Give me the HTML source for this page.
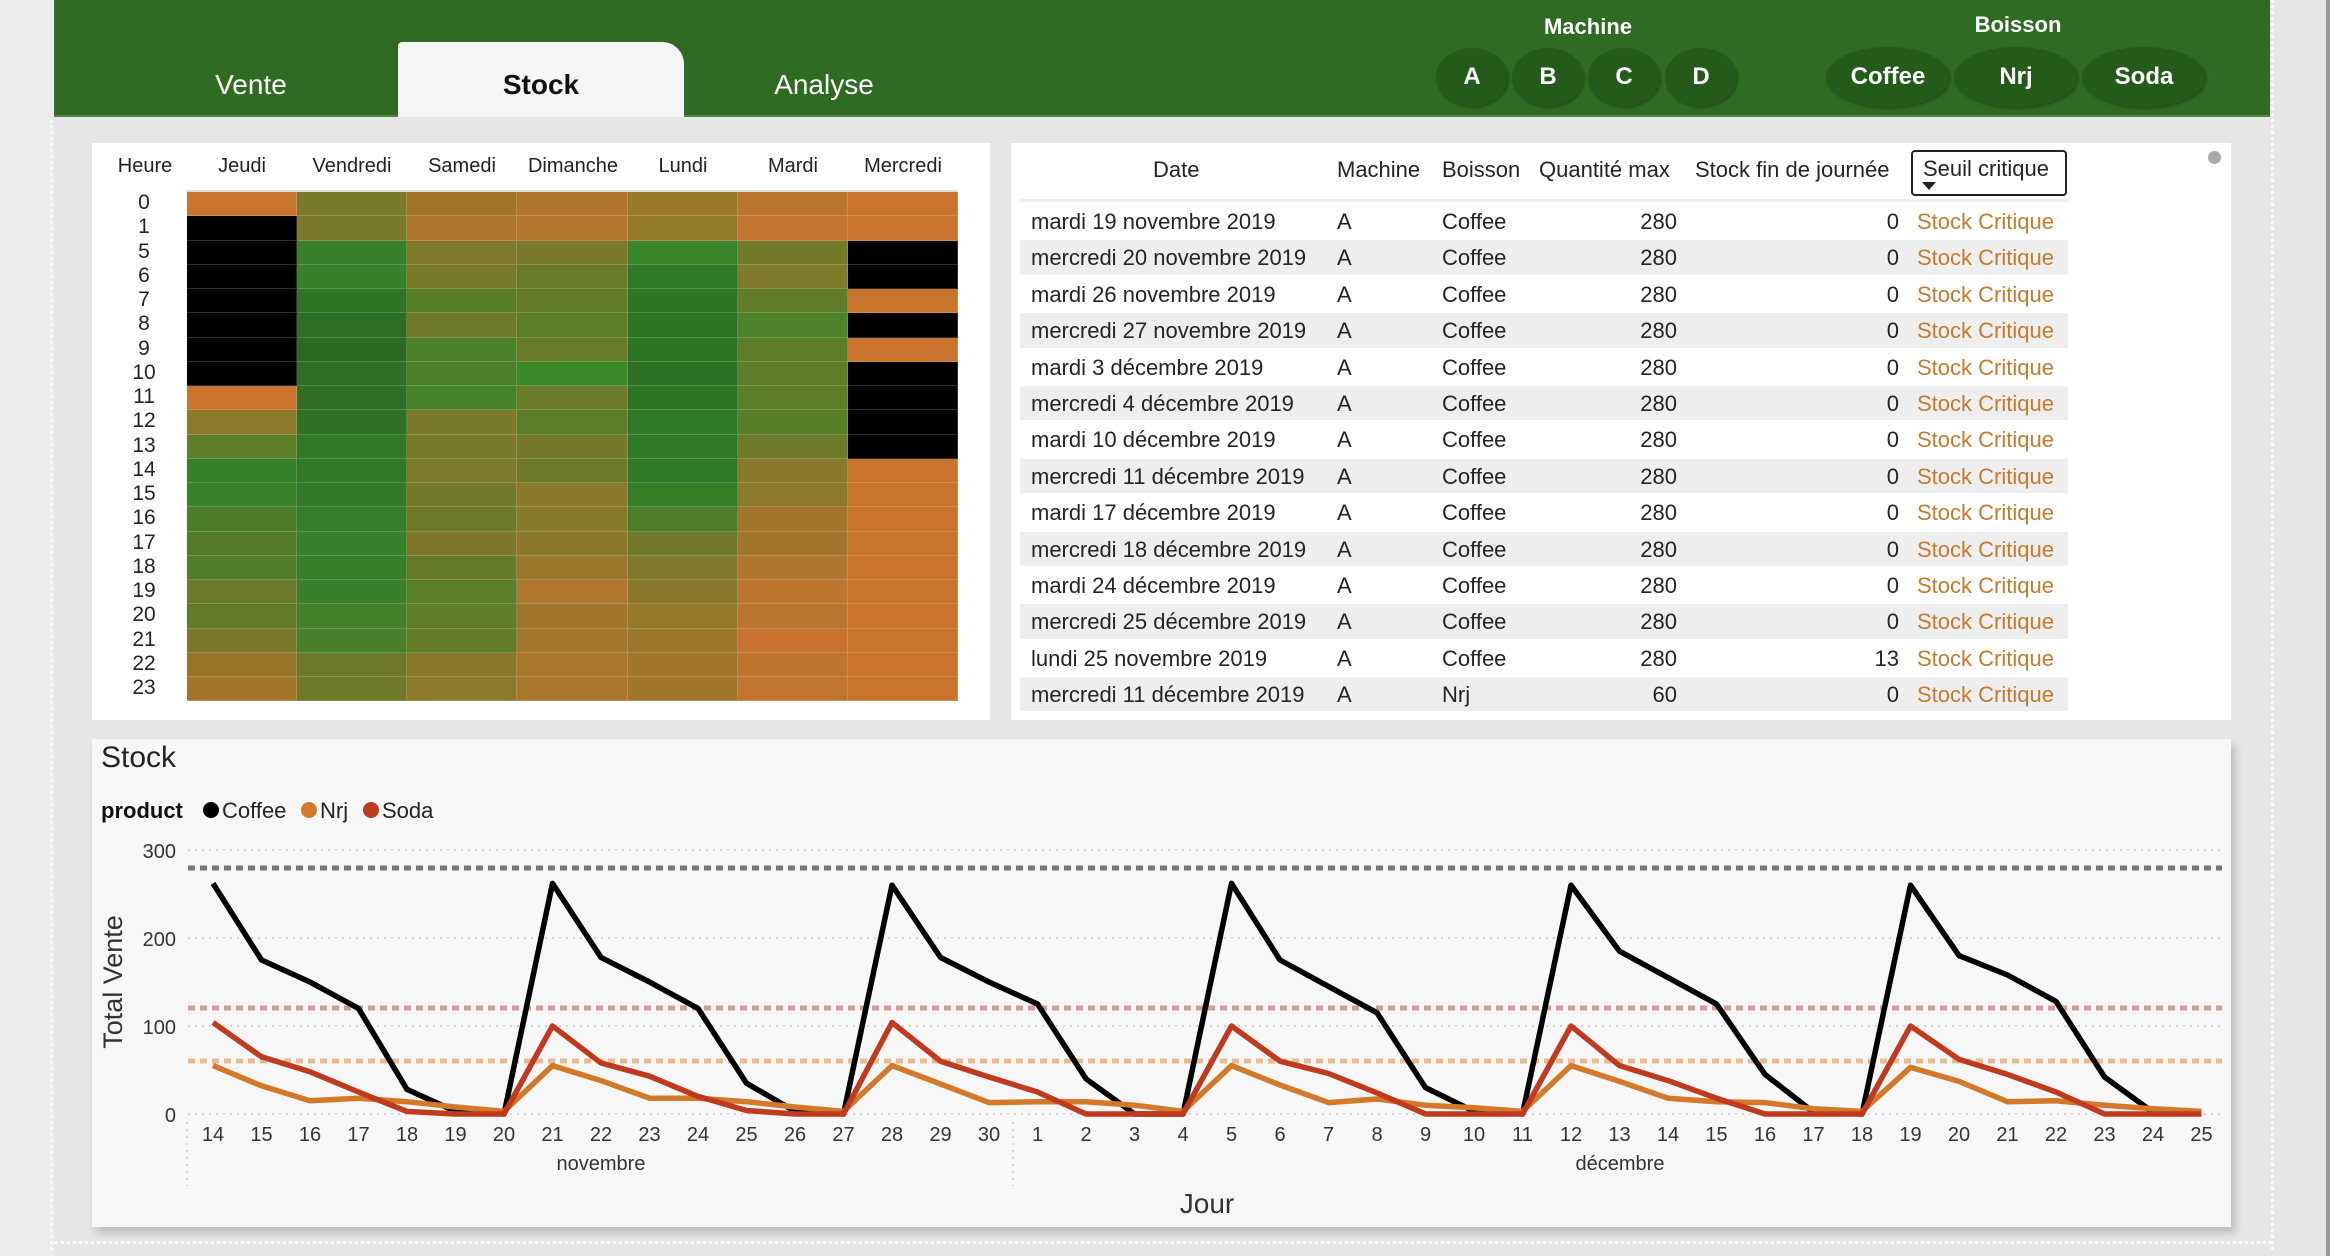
<!DOCTYPE html>
<html><head><meta charset="utf-8"><style>
*{margin:0;padding:0;box-sizing:border-box}
body{width:2330px;height:1256px;background:#e6e6e6;font-family:"Liberation Sans",sans-serif;position:relative;overflow:hidden;color:#252423}
.abs{position:absolute}
#left{left:0;top:0;width:54px;height:1256px;background:#ebebeb}
#vl{left:50px;top:120px;height:1130px;border-left:3px dotted #fafafa}
#vr{left:2271px;top:0;height:1250px;border-left:3px dotted #fafafa}
#hb{left:54px;top:1241px;width:2218px;border-top:3px dotted #fafafa}
#rl{left:2326px;top:0;width:4px;height:1256px;background:#9a9a9a}
#hdr{left:54px;top:0;width:2216px;height:117px;background:#2f6b23;border-bottom:2px solid #4b8a3d}
.tab{top:42px;height:75px;width:286px;text-align:center;line-height:86px;font-size:28px;color:#fff}
#stock{left:398px;background:#f5f5f5;color:#111;font-weight:bold;border-radius:4px 22px 0 0}
.lbl{color:#fff;font-weight:bold;font-size:22px;text-align:center;width:200px}
.btn{top:48px;height:58px;background:#245a1a;border-radius:50%;color:#fff;font-weight:bold;font-size:24px;text-align:center;line-height:58px;box-shadow:1px 2px 2px rgba(0,0,0,.25)}
.panel{background:#fff}
#hm{left:92px;top:143px;width:898px;height:577px}
.hh{top:155px;font-size:20px;color:#222;text-align:center;width:110px}
#grid{left:187px;top:190px;width:771px;display:grid;grid-template-columns:repeat(7,1fr);grid-auto-rows:24.25px;border-top:2px solid #ddd}
#grid i{display:block;border-right:1px solid rgba(255,255,255,.18);border-bottom:1px solid rgba(255,255,255,.18)}
#rows{left:100px;top:191px;width:88px;font-size:21px;text-align:center;line-height:24.25px}
#tb{left:1011px;top:143px;width:1220px;height:577px}
.th{top:157px;font-size:22px;color:#252423}
#tr{left:1020px;top:202px;width:1048px}
.r{height:36.4px;position:relative;font-size:22px;line-height:36px;border-top:2px solid #fff}
.r:nth-child(even){background:#eeeeee}
.r span{position:absolute}
.c1{left:11px}.c2{left:317px}.c3{left:422px}.c4{right:391px}.c5{right:169px}.c6{left:897px;color:#c57a2e}
#chart{left:92px;top:739px;width:2139px;height:488px;background:#f7f7f7;box-shadow:4px 6px 8px rgba(0,0,0,.18)}
</style></head><body>
<div id="left" class="abs"></div><div id="vl" class="abs"></div><div id="vr" class="abs"></div><div id="hb" class="abs"></div><div id="rl" class="abs"></div>
<div id="hdr" class="abs"></div>
<div class="abs tab" style="left:108px">Vente</div>
<div id="stock" class="abs tab">Stock</div>
<div class="abs tab" style="left:681px">Analyse</div>
<div class="abs lbl" style="left:1488px;top:14px">Machine</div>
<div class="abs lbl" style="left:1918px;top:12px">Boisson</div>
<div class="abs btn" style="left:1436px;width:72px">A</div>
<div class="abs btn" style="left:1512px;width:72px">B</div>
<div class="abs btn" style="left:1588px;width:72px">C</div>
<div class="abs btn" style="left:1665px;width:72px">D</div>
<div class="abs btn" style="left:1826px;width:124px;top:47px;height:60px;line-height:60px">Coffee</div>
<div class="abs btn" style="left:1954px;width:124px;top:47px;height:60px;line-height:60px">Nrj</div>
<div class="abs btn" style="left:2082px;width:124px;top:47px;height:60px;line-height:60px">Soda</div>

<div id="hm" class="abs panel"></div>
<div class="abs hh" style="left:90px">Heure</div>
<div class="abs hh" style="left:187px">Jeudi</div>
<div class="abs hh" style="left:297px">Vendredi</div>
<div class="abs hh" style="left:407px">Samedi</div>
<div class="abs hh" style="left:517px;width:112px">Dimanche</div>
<div class="abs hh" style="left:628px">Lundi</div>
<div class="abs hh" style="left:738px">Mardi</div>
<div class="abs hh" style="left:848px">Mercredi</div>
<div id="rows" class="abs"><div>0</div><div>1</div><div>5</div><div>6</div><div>7</div><div>8</div><div>9</div><div>10</div><div>11</div><div>12</div><div>13</div><div>14</div><div>15</div><div>16</div><div>17</div><div>18</div><div>19</div><div>20</div><div>21</div><div>22</div><div>23</div></div>
<div id="grid" class="abs">
<i style="background:#c8732e"></i><i style="background:#7a7a2a"></i><i style="background:#a3752b"></i><i style="background:#b0762f"></i><i style="background:#9b7a2c"></i><i style="background:#b9742e"></i><i style="background:#c8732e"></i>
<i style="background:#000"></i><i style="background:#7a7a2a"></i><i style="background:#b0762f"></i><i style="background:#b3762f"></i><i style="background:#967a2c"></i><i style="background:#c0742f"></i><i style="background:#c8732e"></i>
<i style="background:#000"></i><i style="background:#37812a"></i><i style="background:#7f7a2b"></i><i style="background:#7a7a2a"></i><i style="background:#39862a"></i><i style="background:#737b2a"></i><i style="background:#000"></i>
<i style="background:#000"></i><i style="background:#37812a"></i><i style="background:#787a2a"></i><i style="background:#677b2a"></i><i style="background:#2f7a27"></i><i style="background:#807a2b"></i><i style="background:#000"></i>
<i style="background:#000"></i><i style="background:#2f7326"></i><i style="background:#597e2a"></i><i style="background:#627c2a"></i><i style="background:#2e7526"></i><i style="background:#617c2a"></i><i style="background:#c8732e"></i>
<i style="background:#000"></i><i style="background:#2d6d25"></i><i style="background:#6f7a2a"></i><i style="background:#5b7e2a"></i><i style="background:#2e7326"></i><i style="background:#4b822a"></i><i style="background:#000"></i>
<i style="background:#000"></i><i style="background:#2c6a24"></i><i style="background:#4d802a"></i><i style="background:#677b2a"></i><i style="background:#2f7526"></i><i style="background:#5c7d2a"></i><i style="background:#c8732e"></i>
<i style="background:#000"></i><i style="background:#2e6e25"></i><i style="background:#4a802a"></i><i style="background:#3a8a2a"></i><i style="background:#2d7026"></i><i style="background:#5d7d2a"></i><i style="background:#000"></i>
<i style="background:#c8732e"></i><i style="background:#2d6d25"></i><i style="background:#458229"></i><i style="background:#6b7b2a"></i><i style="background:#2e7526"></i><i style="background:#5c7d2a"></i><i style="background:#000"></i>
<i style="background:#8b7a2b"></i><i style="background:#2f7026"></i><i style="background:#7b7a2a"></i><i style="background:#5c7d2a"></i><i style="background:#2f7a27"></i><i style="background:#587e2a"></i><i style="background:#000"></i>
<i style="background:#5e7e2a"></i><i style="background:#327827"></i><i style="background:#7a7a2a"></i><i style="background:#747a2a"></i><i style="background:#2f7a27"></i><i style="background:#6f7a2a"></i><i style="background:#000"></i>
<i style="background:#35812a"></i><i style="background:#327827"></i><i style="background:#7d7a2a"></i><i style="background:#6e7a2a"></i><i style="background:#2e7a27"></i><i style="background:#8a792b"></i><i style="background:#c8732e"></i>
<i style="background:#38822a"></i><i style="background:#337927"></i><i style="background:#737a2a"></i><i style="background:#8b792b"></i><i style="background:#357f27"></i><i style="background:#8e792b"></i><i style="background:#c8732e"></i>
<i style="background:#4c7e2a"></i><i style="background:#357d28"></i><i style="background:#6c7a2a"></i><i style="background:#867a2b"></i><i style="background:#4f7e2a"></i><i style="background:#a4762d"></i><i style="background:#c8732e"></i>
<i style="background:#557b2a"></i><i style="background:#37812a"></i><i style="background:#7f772a"></i><i style="background:#8b792b"></i><i style="background:#707a2a"></i><i style="background:#a3762d"></i><i style="background:#c8732e"></i>
<i style="background:#537d2a"></i><i style="background:#387f2a"></i><i style="background:#657b2a"></i><i style="background:#9b772c"></i><i style="background:#827a2b"></i><i style="background:#b0752e"></i><i style="background:#c8732e"></i>
<i style="background:#6a7a2a"></i><i style="background:#3c7f2a"></i><i style="background:#5a7e2a"></i><i style="background:#b0772f"></i><i style="background:#8a792b"></i><i style="background:#bd742f"></i><i style="background:#c8732e"></i>
<i style="background:#617b2a"></i><i style="background:#447f2a"></i><i style="background:#5f7d2a"></i><i style="background:#a0772c"></i><i style="background:#977a2c"></i><i style="background:#b9742f"></i><i style="background:#c8732e"></i>
<i style="background:#7d772a"></i><i style="background:#497f2a"></i><i style="background:#627c2a"></i><i style="background:#a3772d"></i><i style="background:#9d772c"></i><i style="background:#c8722f"></i><i style="background:#c8732e"></i>
<i style="background:#967529"></i><i style="background:#6e7a2a"></i><i style="background:#8a792b"></i><i style="background:#ab762e"></i><i style="background:#a1762d"></i><i style="background:#bd742f"></i><i style="background:#c8732e"></i>
<i style="background:#a3742b"></i><i style="background:#6e7a2a"></i><i style="background:#8d782b"></i><i style="background:#ad762e"></i><i style="background:#a1762d"></i><i style="background:#c0742f"></i><i style="background:#c8732e"></i>
</div>

<div id="tb" class="abs panel"></div>
<div class="abs th" style="left:1153px">Date</div>
<div class="abs th" style="left:1337px">Machine</div>
<div class="abs th" style="left:1442px">Boisson</div>
<div class="abs th" style="left:1539px">Quantité max</div>
<div class="abs th" style="left:1695px">Stock fin de journée</div>
<div class="abs" style="left:1911px;top:150px;width:156px;height:46px;border:2px solid #222;border-radius:4px;font-size:22px;padding:4px 0 0 10px">Seuil critique<div class="abs" style="left:9px;top:30px;width:0;height:0;border-left:7px solid transparent;border-right:7px solid transparent;border-top:8px solid #222"></div></div>
<div class="abs" style="left:2208px;top:151px;width:13px;height:13px;border-radius:50%;background:#aaa"></div>
<div class="abs" style="left:1020px;top:199px;width:1048px;height:3px;background:#eee"></div>
<div id="tr" class="abs">
<div class="r"><span class="c1">mardi 19 novembre 2019</span><span class="c2">A</span><span class="c3">Coffee</span><span class="c4">280</span><span class="c5">0</span><span class="c6">Stock Critique</span></div>
<div class="r"><span class="c1">mercredi 20 novembre 2019</span><span class="c2">A</span><span class="c3">Coffee</span><span class="c4">280</span><span class="c5">0</span><span class="c6">Stock Critique</span></div>
<div class="r"><span class="c1">mardi 26 novembre 2019</span><span class="c2">A</span><span class="c3">Coffee</span><span class="c4">280</span><span class="c5">0</span><span class="c6">Stock Critique</span></div>
<div class="r"><span class="c1">mercredi 27 novembre 2019</span><span class="c2">A</span><span class="c3">Coffee</span><span class="c4">280</span><span class="c5">0</span><span class="c6">Stock Critique</span></div>
<div class="r"><span class="c1">mardi 3 décembre 2019</span><span class="c2">A</span><span class="c3">Coffee</span><span class="c4">280</span><span class="c5">0</span><span class="c6">Stock Critique</span></div>
<div class="r"><span class="c1">mercredi 4 décembre 2019</span><span class="c2">A</span><span class="c3">Coffee</span><span class="c4">280</span><span class="c5">0</span><span class="c6">Stock Critique</span></div>
<div class="r"><span class="c1">mardi 10 décembre 2019</span><span class="c2">A</span><span class="c3">Coffee</span><span class="c4">280</span><span class="c5">0</span><span class="c6">Stock Critique</span></div>
<div class="r"><span class="c1">mercredi 11 décembre 2019</span><span class="c2">A</span><span class="c3">Coffee</span><span class="c4">280</span><span class="c5">0</span><span class="c6">Stock Critique</span></div>
<div class="r"><span class="c1">mardi 17 décembre 2019</span><span class="c2">A</span><span class="c3">Coffee</span><span class="c4">280</span><span class="c5">0</span><span class="c6">Stock Critique</span></div>
<div class="r"><span class="c1">mercredi 18 décembre 2019</span><span class="c2">A</span><span class="c3">Coffee</span><span class="c4">280</span><span class="c5">0</span><span class="c6">Stock Critique</span></div>
<div class="r"><span class="c1">mardi 24 décembre 2019</span><span class="c2">A</span><span class="c3">Coffee</span><span class="c4">280</span><span class="c5">0</span><span class="c6">Stock Critique</span></div>
<div class="r"><span class="c1">mercredi 25 décembre 2019</span><span class="c2">A</span><span class="c3">Coffee</span><span class="c4">280</span><span class="c5">0</span><span class="c6">Stock Critique</span></div>
<div class="r"><span class="c1">lundi 25 novembre 2019</span><span class="c2">A</span><span class="c3">Coffee</span><span class="c4">280</span><span class="c5">13</span><span class="c6">Stock Critique</span></div>
<div class="r"><span class="c1">mercredi 11 décembre 2019</span><span class="c2">A</span><span class="c3">Nrj</span><span class="c4">60</span><span class="c5">0</span><span class="c6">Stock Critique</span></div>
</div>

<div id="chart" class="abs"></div>
<svg class="abs" style="left:0;top:0" width="2330" height="1256" font-family="Liberation Sans, sans-serif">
<text x="101" y="767" font-size="30" fill="#252423">Stock</text>
<text x="101" y="818" font-size="22" font-weight="bold" fill="#111">product</text>
<circle cx="211" cy="810" r="8" fill="#000"/><text x="222" y="818" font-size="22" fill="#252423">Coffee</text>
<circle cx="309" cy="810" r="8" fill="#d4792a"/><text x="320" y="818" font-size="22" fill="#252423">Nrj</text>
<circle cx="371" cy="810" r="8" fill="#c03a1e"/><text x="382" y="818" font-size="22" fill="#252423">Soda</text>
<g font-size="20" fill="#333" text-anchor="end"><text x="176" y="858">300</text><text x="176" y="946">200</text><text x="176" y="1034">100</text><text x="176" y="1122">0</text></g>
<text transform="translate(122,982) rotate(-90)" font-size="27" fill="#333" text-anchor="middle">Total Vente</text>
<g stroke="#c8c8c8" stroke-width="1.5" stroke-dasharray="2 5"><line x1="188" y1="850" x2="2222" y2="850"/><line x1="188" y1="938" x2="2222" y2="938"/><line x1="188" y1="1026" x2="2222" y2="1026"/><line x1="188" y1="1114" x2="2222" y2="1114"/><line x1="187" y1="1122" x2="187" y2="1186"/><line x1="1013" y1="1122" x2="1013" y2="1186"/></g>
<g stroke-width="5" stroke-dasharray="7 5"><line x1="188" y1="868" x2="2222" y2="868" stroke="#777"/><line x1="188" y1="1008" x2="2222" y2="1008" stroke="#dc9890"/><line x1="188" y1="1061" x2="2222" y2="1061" stroke="#eabb90"/></g>
<g fill="none" stroke-width="5.5" stroke-linejoin="round">
<polyline stroke="#000" points="213,883.4 261.5,960 310,982 358.5,1008.4 407,1089.4 455.5,1111.4 504,1114 552.5,883.4 601,957.4 649.5,982 698,1008.4 746.5,1083.2 795,1111.4 843.5,1114 892,885.2 940.5,957.4 989,982 1037.5,1004 1086,1078.8 1134.5,1114 1183,1114 1231.5,883.4 1280,960 1328.5,986.4 1377,1012.8 1425.5,1087.6 1474,1111.4 1522.5,1114 1571,885.2 1619.5,951.2 1668,977.6 1716.5,1004 1765,1074.4 1813.5,1112.2 1862,1114 1910.5,885.2 1959,955.6 2007.5,975 2056,1001.4 2104.5,1077 2153,1112.2 2201.5,1112.2"/>
<polyline stroke="#d4792a" points="213,1065.6 261.5,1085.8 310,1100.8 358.5,1098.2 407,1101.7 455.5,1107 504,1111.4 552.5,1065.6 601,1080.6 649.5,1098.2 698,1098.2 746.5,1101.7 795,1107 843.5,1111.4 892,1065.6 940.5,1084 989,1102.6 1037.5,1101.7 1086,1101.7 1134.5,1105.2 1183,1111.4 1231.5,1065.6 1280,1085 1328.5,1102.6 1377,1099 1425.5,1105.2 1474,1107.8 1522.5,1111.4 1571,1065.6 1619.5,1081.4 1668,1098.2 1716.5,1101.7 1765,1102.6 1813.5,1108.7 1862,1111.4 1910.5,1067.4 1959,1081.4 2007.5,1101.7 2056,1100.8 2104.5,1105.2 2153,1108.7 2201.5,1111.4"/>
<polyline stroke="#c03a1e" points="213,1022.5 261.5,1056.8 310,1071.8 358.5,1092 407,1111.4 455.5,1114 504,1114 552.5,1026 601,1063 649.5,1076.2 698,1096.4 746.5,1110.5 795,1114 843.5,1114 892,1022.5 940.5,1061.2 989,1077 1037.5,1092 1086,1114 1134.5,1114 1183,1114 1231.5,1026 1280,1061.2 1328.5,1073.5 1377,1092.9 1425.5,1114 1474,1114 1522.5,1114 1571,1026 1619.5,1065.6 1668,1080.6 1716.5,1098.2 1765,1114 1813.5,1114 1862,1114 1910.5,1026 1959,1059.4 2007.5,1074.4 2056,1092 2104.5,1114 2153,1114 2201.5,1114"/>
</g>
<g font-size="20" fill="#333" text-anchor="middle">
<text x="213" y="1141">14</text><text x="261.5" y="1141">15</text><text x="310" y="1141">16</text><text x="358.5" y="1141">17</text><text x="407" y="1141">18</text><text x="455.5" y="1141">19</text><text x="504" y="1141">20</text><text x="552.5" y="1141">21</text><text x="601" y="1141">22</text><text x="649.5" y="1141">23</text><text x="698" y="1141">24</text><text x="746.5" y="1141">25</text><text x="795" y="1141">26</text><text x="843.5" y="1141">27</text><text x="892" y="1141">28</text><text x="940.5" y="1141">29</text><text x="989" y="1141">30</text><text x="1037.5" y="1141">1</text><text x="1086" y="1141">2</text><text x="1134.5" y="1141">3</text><text x="1183" y="1141">4</text><text x="1231.5" y="1141">5</text><text x="1280" y="1141">6</text><text x="1328.5" y="1141">7</text><text x="1377" y="1141">8</text><text x="1425.5" y="1141">9</text><text x="1474" y="1141">10</text><text x="1522.5" y="1141">11</text><text x="1571" y="1141">12</text><text x="1619.5" y="1141">13</text><text x="1668" y="1141">14</text><text x="1716.5" y="1141">15</text><text x="1765" y="1141">16</text><text x="1813.5" y="1141">17</text><text x="1862" y="1141">18</text><text x="1910.5" y="1141">19</text><text x="1959" y="1141">20</text><text x="2007.5" y="1141">21</text><text x="2056" y="1141">22</text><text x="2104.5" y="1141">23</text><text x="2153" y="1141">24</text><text x="2201.5" y="1141">25</text>
<text x="601" y="1170">novembre</text><text x="1620" y="1170">décembre</text>
<text x="1207" y="1213" font-size="28">Jour</text>
</g>
</svg>
</body></html>
